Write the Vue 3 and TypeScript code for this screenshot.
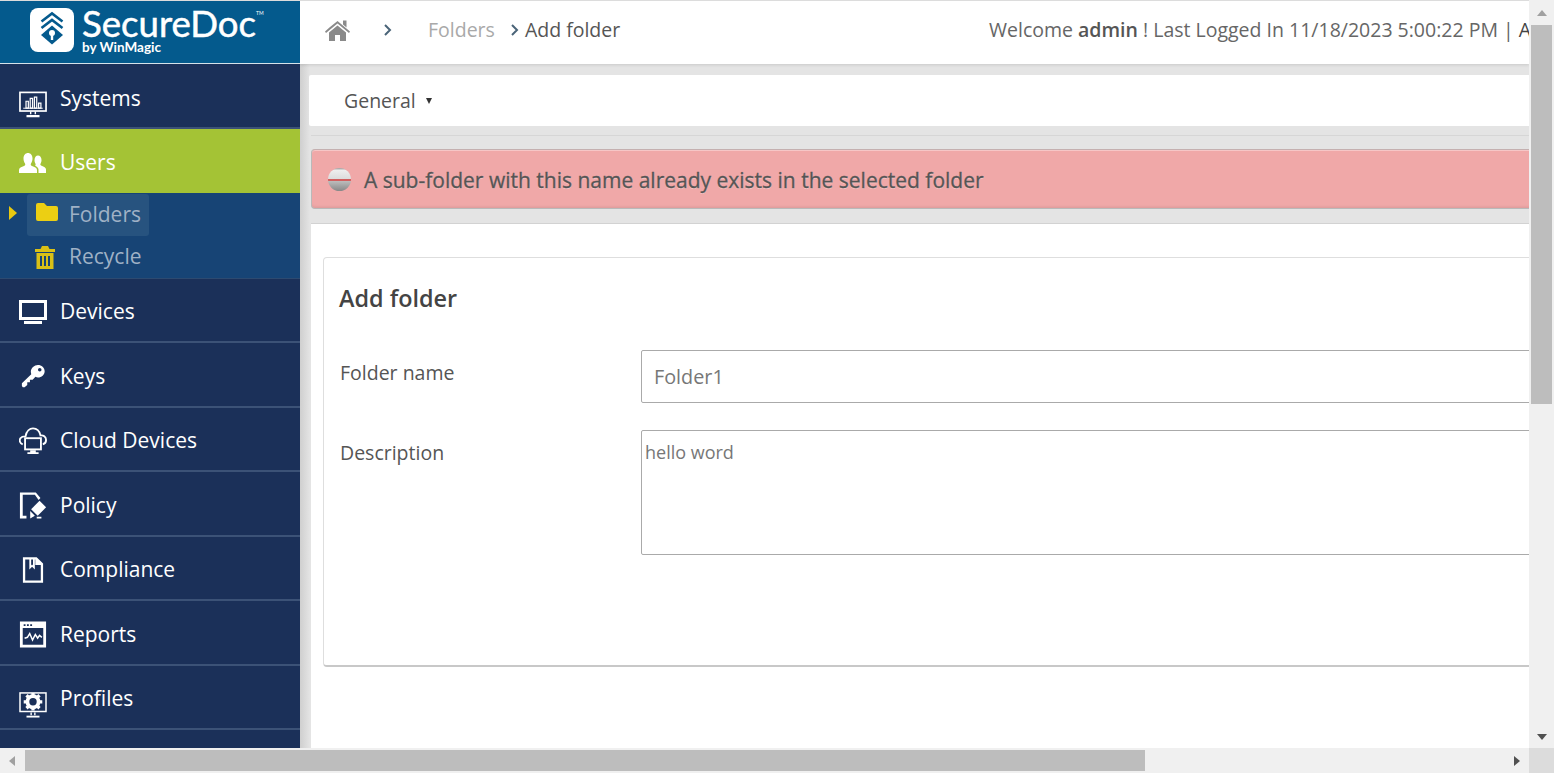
<script setup lang="ts">
interface NavItem {
  label: string
  icon: string
}

const topItems: NavItem[] = [{ label: 'Systems', icon: 'systems' }]
const bottomItems: NavItem[] = [
  { label: 'Devices', icon: 'devices' },
  { label: 'Keys', icon: 'keys' },
  { label: 'Cloud Devices', icon: 'cloud' },
  { label: 'Policy', icon: 'policy' },
  { label: 'Compliance', icon: 'compliance' },
  { label: 'Reports', icon: 'reports' },
  { label: 'Profiles', icon: 'profiles' },
]
</script>

<template>
  <div class="window">
    <div class="page">
      <!-- left menu -->
      <aside class="sidebar">
        <div class="brand">
          <svg class="brand-mark" width="44" height="44" viewBox="0 0 44 44">
            <rect width="44" height="44" rx="8" fill="#fff" />
            <path d="M11.5 13.5 22 5.5l10.5 8M11.5 20 22 12l10.5 8" fill="none" stroke="#045a8d" stroke-width="2.6" />
            <path d="M22 17.5 33 27 22 36.5 11 27z" fill="#045a8d" />
            <circle cx="22" cy="25" r="3" fill="#fff" />
            <rect x="20.8" y="25" width="2.4" height="7" fill="#fff" />
          </svg>
          <div class="brand-text">
            <div class="brand-name">SecureDoc<sup>TM</sup></div>
            <div class="brand-sub">by WinMagic</div>
          </div>
        </div>

        <a v-for="item in topItems" :key="item.label" class="nav-item nav-first">
          <span class="nav-icon icon-low">
            <svg width="28" height="27" viewBox="0 0 30 29" fill="none" stroke="#fff">
              <rect x="1" y="1.500" width="28" height="20" stroke-width="1.800" />
              <path d="M4.500 18.500h21" stroke-width="1" />
              <path d="M7.500 11h2.500v7.500H7.500zM12 8h2.500v10.500H12zM16.500 6.500H19v12h-2.500zM21 13h2.500v5.500H21z" stroke-width="1.300" />
              <path d="M12.500 22v3M17.500 22v3" stroke-width="1.500" />
              <path d="M8 27h14" stroke-width="2.400" />
            </svg>
          </span>
          {{ item.label }}
        </a>

        <a class="nav-item nav-active">
          <span class="nav-icon">
            <svg width="28" height="20" viewBox="0 0 28 20" fill="#fff">
              <path d="M0 20v-3c0-2.200 2.500-3.200 5-4 1.300-.5 1.500-1.400 1-2.500C5.200 9.200 4.500 7.700 4.500 5.500 4.500 2.200 6.500 0 9 0s4.500 2.200 4.500 5.500c0 2.200-.7 3.700-1.500 5-.5 1.100-.3 2 1 2.500 2.500.8 5 1.800 5 4v3z" />
              <path d="M19.500 20v-3.200c0-1.800-1.300-3.200-3.500-4.300.6-.4.800-.9.500-1.700-.6-1-1-2.200-1-3.800 0-2.700 1.500-4.500 3.500-4.500s3.500 1.800 3.500 4.500c0 1.600-.4 2.800-1 3.800-.4.900 0 1.500 1 1.900 2.500.8 4.500 1.700 4.500 3.800V20z" />
            </svg>
          </span>
          Users
        </a>

        <div class="subnav">
          <div class="sub-row">
            <svg class="sub-arrow" width="8" height="14" viewBox="0 0 8 14"><path d="M0 0l8 7-8 7z" fill="#e8c810" /></svg>
            <a class="sub-link sub-current">
              <svg class="sub-icon-up" width="22" height="18" viewBox="0 0 22 18"><path d="M0 2q0-2 2-2h6l3 3h9q2 0 2 2v11q0 2-2 2H2q-2 0-2-2z" fill="#eccf13" /></svg>
              <span class="sub-label">Folders</span>
            </a>
          </div>
          <div class="sub-row">
            <a class="sub-link">
              <svg width="20" height="23" viewBox="0 0 20 23" fill="#d9c016">
                <path d="M7 0h6l1.500 3H20v3H0V3h5.500zM1.500 7h17v16h-17zM5 10v10h2V10zm4 0v10h2V10zm4 0v10h2V10z" fill-rule="evenodd" />
              </svg>
              <span class="sub-label sub-label-wide">Recycle</span>
            </a>
          </div>
        </div>

        <a v-for="item in bottomItems" :key="item.label" class="nav-item">
          <span class="nav-icon" :class="{ 'icon-low': item.icon === 'profiles' }">
            <svg v-if="item.icon === 'devices'" width="28" height="24" viewBox="0 0 28 24" fill="#fff">
              <path d="M0 0h28v20H0zM3 3v14h22V3z" fill-rule="evenodd" />
              <path d="M5 21h18v3H5z" />
            </svg>
            <svg v-else-if="item.icon === 'keys'" width="25" height="25" viewBox="0 0 28 26" fill="#fff">
              <path d="M19 0c4 0 7.500 3 7.500 7 0 4-3.500 7-7.500 7-1 0-2-.2-2.800-.6L13 16.500h-3v3H7v3l-3 2.500H2l-1-1.500v-3l10.500-10C11.200 9.500 11 8.400 11 7.500 11 3.500 15 0 19 0zm2 3.500a2 2 0 1 0 0 4 2 2 0 0 0 0-4z" fill-rule="evenodd" />
            </svg>
            <svg v-else-if="item.icon === 'cloud'" width="28" height="28" viewBox="0 0 30 29" fill="none" stroke="#fff" stroke-width="2">
              <path d="M4 18C1 17 0 14 1.500 11.500 3 9.500 5 9.500 7 9.500 8 4 11.500 1 15 1c4 0 7 3 8 7.500 3-.5 6 1.500 6 5 0 2-1 4-3.500 4.500" />
              <rect x="6.500" y="11.500" width="17" height="12" />
              <path d="M12 25.500h6M9 27.500h12" />
            </svg>
            <svg v-else-if="item.icon === 'policy'" width="28" height="29" viewBox="0 0 30 30" fill="#fff">
              <path d="M1 1h17l5 6-2 2-4-5.500H4v22.500h4V29H1z" />
              <path d="M22 10l7 7-9 9-7-7z" />
              <path d="M12 21l5 5-5 3zM19 27h5v2h-5z" />
            </svg>
            <svg v-else-if="item.icon === 'compliance'" width="22" height="28" viewBox="0 0 24 28" fill="#fff">
              <path d="M1 0h15l7 7v21H1zM3.500 2.500v23h17V8.500h-6v-6H14v11l-3-3-3 3v-11zM10 2.500v6.500l1-1 1 1V2.500z" fill-rule="evenodd" />
            </svg>
            <svg v-else-if="item.icon === 'reports'" width="28" height="29" viewBox="0 0 30 30" fill="#fff">
              <path d="M1 1h28v28H1zM4 8v18h22V8z" fill-rule="evenodd" />
              <path d="M5 4h2v2H5zM8.500 4h2v2h-2zM12 4h2v2h-2z" fill="#1b3059" />
              <path d="M6 19l3-1 2.500-4 3 7 3-6 2.500 4 2-3 2.500 2" fill="none" stroke="#fff" stroke-width="1.600" />
            </svg>
            <svg v-else width="28" height="26" viewBox="0 0 30 28" fill="none" stroke="#fff">
              <rect x="1" y="1" width="28" height="20" stroke-width="1.600" />
              <circle cx="15" cy="10.500" r="6" stroke-width="4" />
              <path d="M15 1v4M15 16v4M5 10.500h4M21 10.500h4M8 3.500l3 3M19 14.500l3 3M22 3.500l-3 3M11 14.500l-3 3" stroke-width="3.500" />
              <path d="M13 22v3M17 22v3" stroke-width="1.500" />
              <path d="M8 26.500h14" stroke-width="2" />
            </svg>
          </span>
          {{ item.label }}
        </a>
      </aside>

      <main class="main">
        <header class="topbar">
          <div class="crumbs">
            <svg class="home" width="25" height="23" viewBox="0 0 25 23" fill="#8a8a8a">
              <path d="M12.500 3 25 13.500l-1 1.500-11.500-9.500L1 15l-1-1.500 5-4.500z" />
              <path d="M18 2.500h3.500v7L18 6.500z" />
              <path d="M12.500 7.500 21 14.500V23h-6v-6h-5v6H4v-8.500z" />
            </svg>
            <svg class="chev chev-first" width="8" height="12" viewBox="0 0 8 12"><path d="M1 1l5 5-5 5" fill="none" stroke="#4a6478" stroke-width="2" /></svg>
            <span class="crumb-muted">Folders</span>
            <svg class="chev chev-second" width="8" height="12" viewBox="0 0 8 12"><path d="M1 1l5 5-5 5" fill="none" stroke="#4a6478" stroke-width="2" /></svg>
            <span class="crumb-current">Add folder</span>
          </div>
          <div class="welcome">Welcome <b>admin</b> ! Last Logged In 11/18/2023 5:00:22 PM | <span class="admin-link">Admin</span></div>
        </header>

        <div class="content">
          <div class="tabs">
            <span>General</span>
            <i class="caret"></i>
          </div>
          <div class="rule"></div>
          <div class="alert">
            <span class="alert-icon"></span>
            <span>A sub-folder with this name already exists in the selected folder</span>
          </div>
          <section class="panel">
            <div class="form-card">
              <h2>Add folder</h2>
              <div class="form-grid">
                <label>Folder name</label>
                <input class="field-input" value="Folder1" />
                <label>Description</label>
                <textarea class="field-area">hello word</textarea>
              </div>
            </div>
          </section>
        </div>
      </main>
    </div>

    <!-- window scrollbars -->
    <div class="scroll-v">
      <i class="arrow-up"></i>
      <div class="thumb-v"></div>
      <i class="arrow-down"></i>
    </div>
    <div class="scroll-h">
      <i class="arrow-left"></i>
      <div class="thumb-h"></div>
      <i class="arrow-right"></i>
    </div>
    <div class="scroll-corner"></div>
  </div>
</template>

<style>
html,
body {
  margin: 0;
  height: 100%;
  overflow: hidden;
}
</style>

<style scoped>
* {
  box-sizing: border-box;
}

.window {
  width: 1554px;
  height: 773px;
  display: grid;
  grid-template-columns: 1529px 25px;
  grid-template-rows: 748px 25px;
  font-family: 'Open Sans', 'Liberation Sans', sans-serif;
  overflow: hidden;
}

.page {
  display: flex;
  overflow: hidden;
  border-top: 1px solid #dcdcdc;
}

/* left menu */
.sidebar {
  width: 300px;
  flex-shrink: 0;
  background: #1b3059;
}

.brand {
  height: 63px;
  background: #045a8d;
  border-bottom: 1px solid #d5e2ea;
  display: flex;
  align-items: flex-start;
  padding: 7px 0 0 30px;
  color: #fff;
}

.brand-text {
  margin-left: 8px;
}

.brand-name {
  font-family: Lato, 'Open Sans', sans-serif;
  font-size: 36.600px;
  line-height: 31px;
  -webkit-text-stroke: 0.5px #fff;
  white-space: nowrap;
}

.brand-name sup {
  font-size: 5px;
  line-height: 0;
  vertical-align: 22px;
  -webkit-text-stroke: 0;
}

.brand-sub {
  font-family: Lato, 'Open Sans', sans-serif;
  font-size: 13.500px;
  font-weight: 700;
  line-height: 17px;
}

.nav-item {
  height: 64.500px;
  display: flex;
  align-items: center;
  color: #fff;
  font-size: 21px;
  padding-top: 3px;
  border-bottom: 2px solid #3c5277;
}

.nav-first {
  height: 65px;
  padding-top: 5px;
}

.nav-icon {
  width: 60px;
  flex-shrink: 0;
  display: flex;
  padding: 0 13px 0 19px;
  margin-top: 2px;
  justify-content: center;
}

.icon-low {
  margin-top: 13px;
}

.nav-active {
  height: 64px;
  background: #a4c335;
  padding-top: 1px;
  border-bottom: 0;
}

.subnav {
  height: 85.500px;
  padding-top: 1px;
  background: #174475;
  border-bottom: 1px solid #2d4a70;
}

.sub-row {
  height: 42px;
  display: flex;
  align-items: center;
  padding-left: 27px;
  position: relative;
}

.sub-arrow {
  position: absolute;
  left: 9px;
  top: 12px;
}

.sub-link {
  height: 42px;
  width: 122px;
  display: flex;
  align-items: center;
  border-radius: 3px;
  padding-left: 8px;
  color: #9fb1c6;
  font-size: 21px;
}

.sub-current {
  background: #27537f;
}

.sub-icon-up {
  margin-bottom: 7px;
  margin-left: 1px;
}

.sub-label {
  margin: 0 0 3px 11px;
}

.sub-label-wide {
  margin-left: 14px;
}

/* main column */
.main {
  flex: 1;
  min-width: 0;
  overflow: hidden;
  background: linear-gradient(90deg, #cfcfcf 0, #e4e4e4 10px);
}

.topbar {
  height: 63px;
  padding-bottom: 6px;
  background: #fff;
  display: flex;
  align-items: center;
  white-space: nowrap;
  font-size: 19.500px;
  box-shadow: 0 1px 3px rgba(0, 0, 0, 0.12);
  position: relative;
}

.crumbs {
  width: 689px;
  flex-shrink: 0;
  display: flex;
  align-items: center;
}

.home {
  margin-left: 25px;
}

.chev-first {
  margin-left: 34px;
}

.crumb-muted {
  margin-left: 36px;
  color: #a9a9a9;
}

.chev-second {
  margin-left: 16px;
}

.crumb-current {
  margin-left: 6px;
  color: #555;
}

.welcome {
  color: #666;
}

.welcome b {
  font-weight: 600;
  color: #555;
}

.admin-link {
  color: #444;
}

.content {
  width: 1800px;
  height: 684px;
  padding: 11px 0 0 9px;
  display: flex;
  flex-direction: column;
}

.tabs {
  height: 51px;
  background: #fff;
  border-radius: 2px;
  display: flex;
  align-items: center;
  padding-left: 35px;
  font-size: 19.500px;
  color: #555;
}

.caret {
  width: 0;
  height: 0;
  margin-left: 10px;
  border-left: 3.500px solid transparent;
  border-right: 3.500px solid transparent;
  border-top: 6px solid #333;
}

.rule {
  height: 1px;
  margin: 9px 0 13px 2px;
  background: #d6d6d6;
}

.alert {
  height: 60px;
  margin-left: 2px;
  display: flex;
  align-items: center;
  padding: 1px 0 0 16px;
  background: #f0a8a8;
  border: 1px solid #b9b9b9;
  border-top-color: #c4b0b0;
  border-right: 0;
  border-radius: 4px 0 0 4px;
  box-shadow: inset 0 1px 0 #f6c6c6, inset 0 -3px 3px -2px #d99a9a;
  font-size: 21px;
  color: #555;
  -webkit-text-stroke: 0.3px #555;
  text-shadow: 0 1px 0 rgba(255, 255, 255, 0.35);
}

.alert-icon {
  width: 23px;
  height: 23px;
  border-radius: 50%;
  margin-right: 13px;
  background: linear-gradient(180deg, #999 0, #eee 10%, #ddd 46%, #d25f5f 48%, #d25f5f 56%, #bbb 58%, #888 100%);
}

.panel {
  flex: 1;
  margin: 14px 0 0 2px;
  background: #fff;
  border-top: 1px solid #d2d2d2;
  padding: 33px 0 0 12px;
}

.form-card {
  height: 410px;
  border: 1px solid #dedede;
  border-bottom: 2px solid #c8c8c8;
  border-radius: 4px 0 0 4px;
  padding: 23px 0 0 15px;
}

.form-card h2 {
  margin: 0 0 35px;
  font-size: 23.400px;
  line-height: 34px;
  font-weight: 600;
  color: #444;
}

.form-grid {
  display: grid;
  grid-template-columns: 302px 1200px;
  grid-template-rows: 53px 125px;
  row-gap: 27px;
  font-size: 19.500px;
  color: #555;
}

.form-grid label {
  padding: 9px 0 0 1px;
}

.field-input,
.field-area {
  border: 1px solid #aaa;
  border-radius: 2px;
  font-family: inherit;
  color: #777;
  background: #fff;
  outline: none;
  width: 100%;
  height: 100%;
}

.field-input {
  padding: 0 0 0 12px;
  font-size: 19.800px;
}

.field-area {
  padding: 9px 3px;
  font-size: 18px;
  line-height: 24px;
  resize: none;
}

/* window scrollbars */
.scroll-v {
  background: #f0f0f0;
  display: flex;
  flex-direction: column;
  align-items: center;
}

.thumb-v {
  width: 21px;
  height: 379px;
  margin-top: 9px;
  background: #bdbdbd;
}

.scroll-h {
  background: #f0f0f0;
  display: flex;
  align-items: center;
  position: relative;
}

.thumb-h {
  width: 1120px;
  height: 21px;
  margin-left: 10px;
  background: #bdbdbd;
}

.scroll-corner {
  background: #dcdcdc;
}

.arrow-up,
.arrow-down,
.arrow-left,
.arrow-right {
  width: 0;
  height: 0;
  display: block;
  flex-shrink: 0;
}

.arrow-up {
  margin-top: 10px;
  border-left: 5.500px solid transparent;
  border-right: 5.500px solid transparent;
  border-bottom: 6px solid #a0a0a0;
}

.arrow-down {
  margin-top: auto;
  margin-bottom: 8px;
  border-left: 5.500px solid transparent;
  border-right: 5.500px solid transparent;
  border-top: 6px solid #505050;
}

.arrow-left {
  margin-left: 9px;
  border-top: 5.500px solid transparent;
  border-bottom: 5.500px solid transparent;
  border-right: 6px solid #a0a0a0;
}

.arrow-right {
  margin-left: auto;
  margin-right: 9px;
  border-top: 5.500px solid transparent;
  border-bottom: 5.500px solid transparent;
  border-left: 6px solid #505050;
}
</style>
